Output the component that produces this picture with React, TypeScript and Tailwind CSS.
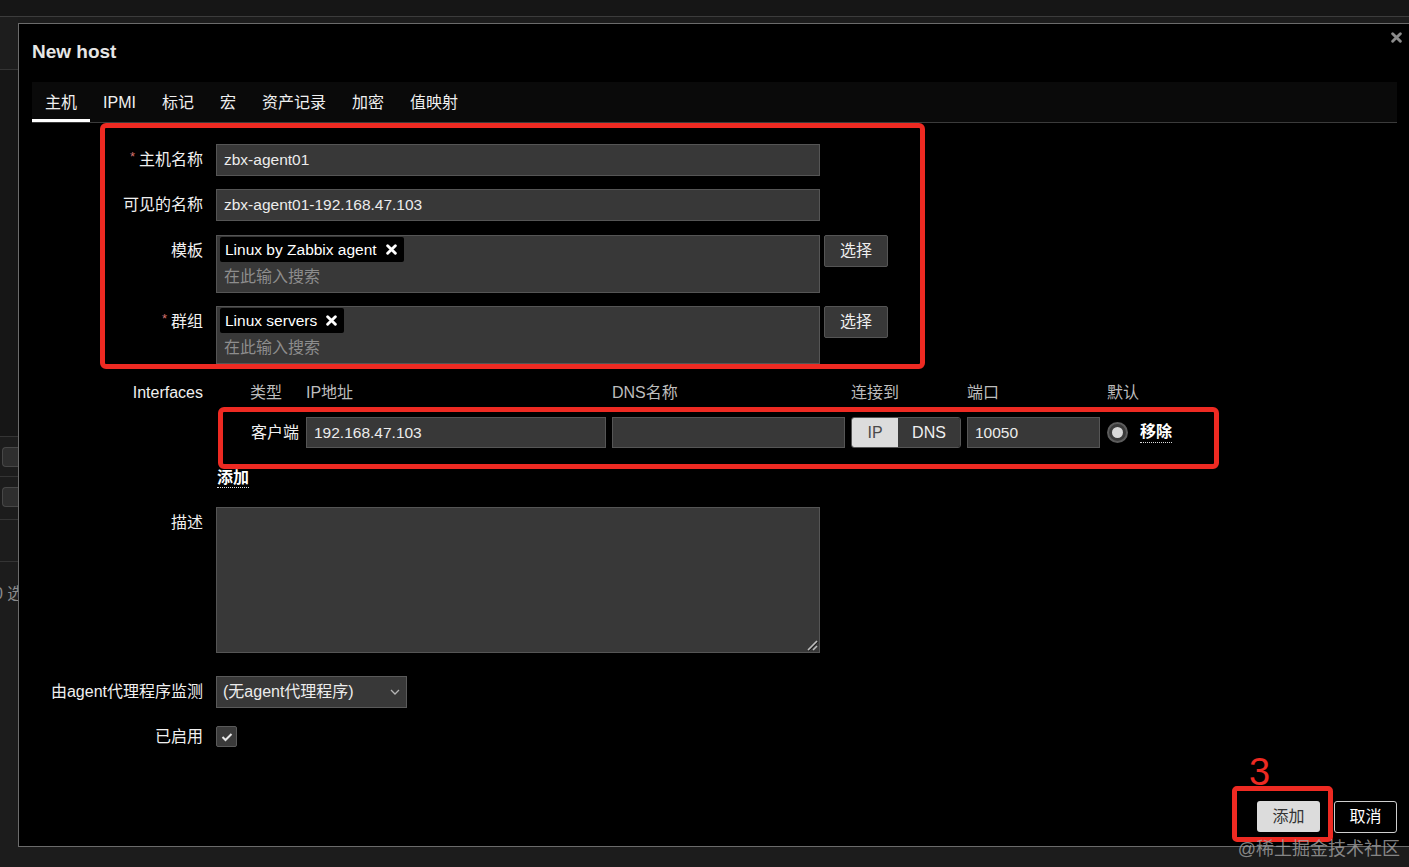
import React from 'react';

const font = "font-['Liberation_Sans','Noto_Sans_CJK_SC',sans-serif]";
const inputCls =
  'h-[32px] bg-[#383838] border border-[#555] px-[7px] text-[15.5px] text-[#ececec] outline-none';
const red = 'border-[#ee2a22]';

function Cross({ className = '' }: { className?: string }) {
  return (
    <svg viewBox="0 0 10 10" className={className}>
      <path d="M1.5 1.5 L8.5 8.5 M8.5 1.5 L1.5 8.5" stroke="currentColor" strokeWidth="2.6" strokeLinecap="round" />
    </svg>
  );
}

function Tag({ label }: { label: string }) {
  return (
    <span className="inline-flex items-center h-[25px] bg-black rounded-[2px] pl-[5px] pr-[7px] text-[15.5px] text-white">
      {label}
      <Cross className="w-[11px] h-[11px] ml-[9px] text-white" />
    </span>
  );
}

function MultiSelect({ tag }: { tag: string }) {
  return (
    <div className="w-[604px] h-[58px] bg-[#383838] border border-[#555] pl-[3px] pt-[1px]">
      <Tag label={tag} />
      <div className="pl-[4px] mt-[4px] leading-[22px] text-[16px] text-[#8d8d8d]">在此输入搜索</div>
    </div>
  );
}

function PickButton() {
  return (
    <button className="ml-[4px] w-[64px] h-[32px] bg-[#383838] border border-[#555] rounded-[2px] text-[16px] text-[#eee]">
      选择
    </button>
  );
}

function BoxLabel({ children, required }: { children: React.ReactNode; required?: boolean }) {
  return (
    <div className="w-[98px] mr-[13px] h-[32px] flex items-center justify-end text-[16px] text-[#f0f0f0] shrink-0">
      {required && <span className="text-[#d6716f] text-[13px] mr-[4px] relative -top-[3px]">*</span>}
      {children}
    </div>
  );
}

function Label({ children, h = 'h-[32px]' }: { children: React.ReactNode; h?: string }) {
  return (
    <div className={`w-[184px] mr-[13px] ${h} flex items-center justify-end text-[16px] text-[#f0f0f0] shrink-0`}>
      {children}
    </div>
  );
}

export default function App() {
  const tabs = ['主机', 'IPMI', '标记', '宏', '资产记录', '加密', '值映射'];
  return (
    <div className={`relative h-[867px] w-full overflow-hidden bg-[#1c1c1c] ${font}`}>
      <div className="h-[17px] bg-[#161616] border-b border-[#3c3c3c]" />
      <div className="flex">
        {/* page behind the dialog */}
        <div className="w-[18px] shrink-0 overflow-hidden">
          <div className="h-[53px] bg-[#1d1d1d] border-b border-[#343434]" />
          <div className="h-[367px] bg-[#161616] border-b border-[#343434]" />
          <div className="h-[10px]" />
          <div className="ml-[2px] h-[20px] rounded-l-[4px] bg-[#2e2e2e] border border-r-0 border-[#474747]" />
          <div className="h-[10px] border-b border-[#343434]" />
          <div className="h-[10px]" />
          <div className="ml-[2px] h-[20px] rounded-l-[4px] bg-[#2e2e2e] border border-r-0 border-[#474747]" />
          <div className="h-[13px] border-b border-[#343434]" />
          <div className="h-[42px] border-b border-[#343434]" />
          <div className="mt-[20px] -ml-[6px] whitespace-nowrap text-[16px] text-[#8a8a8a]">0 选</div>
        </div>

        {/* dialog */}
        <div className="mt-[6px] flex-1 h-[824px] bg-black border-t border-l border-b border-[#6b6b6b] flex flex-col">
          <div className="flex justify-between">
            <div className="h-[56px] pl-[13px] flex items-center text-[19px] font-bold text-[#e6e6e6]">New host</div>
            <Cross className="mt-[8px] mr-[7px] w-[11px] h-[11px] text-[#8b8b8b]" />
          </div>

          <div className="mt-[2px] ml-[13px] mr-[12px] h-[41px] bg-[#0a0a0a] border-b border-[#3b3b3b] flex">
            {tabs.map((t, i) => (
              <div
                key={t}
                className={`h-[40px] px-[13px] pt-[4px] flex items-center text-[16px] text-[#f0f0f0] border-b-[3px] ${
                  i === 0 ? 'border-white' : 'border-transparent'
                }`}
              >
                {t}
              </div>
            ))}
          </div>

          {/* annotated block 1 */}
          <div className={`ml-[81px] w-[825px] h-[246px] border-[5px] ${red} rounded-[6px] pt-[16px]`}>
            <div className="flex">
              <BoxLabel required>主机名称</BoxLabel>
              <input readOnly value="zbx-agent01" className={`${inputCls} w-[604px]`} />
            </div>
            <div className="flex mt-[13px]">
              <BoxLabel>可见的名称</BoxLabel>
              <input readOnly value="zbx-agent01-192.168.47.103" className={`${inputCls} w-[604px]`} />
            </div>
            <div className="flex mt-[14px] items-start">
              <BoxLabel>模板</BoxLabel>
              <MultiSelect tag="Linux by Zabbix agent" />
              <PickButton />
            </div>
            <div className="flex mt-[13px] items-start">
              <BoxLabel required>群组</BoxLabel>
              <MultiSelect tag="Linux servers" />
              <PickButton />
            </div>
          </div>

          {/* interfaces */}
          <div className="flex mt-[14px]">
            <Label h="h-[20px]">Interfaces</Label>
            <div className="flex flex-col">
              <div className="h-[20px] flex leading-[20px] text-[16px] text-[#bdbdbd]">
                <div className="w-[34px]" />
                <div className="w-[56px]">类型</div>
                <div className="w-[306px]">IP地址</div>
                <div className="w-[239px]">DNS名称</div>
                <div className="w-[116px]">连接到</div>
                <div className="w-[140px]">端口</div>
                <div>默认</div>
              </div>
              <div className={`mt-[4px] ml-[2px] w-[1001px] h-[62px] border-[5px] ${red} rounded-[6px] pt-[5px]`}>
                <div className="flex items-center h-[31px]">
                  <div className="w-[76px] text-right text-[16px] text-[#f0f0f0]">客户端</div>
                  <input readOnly value="192.168.47.103" className={`${inputCls} !h-[31px] ml-[7px] w-[300px]`} />
                  <input readOnly value="" className={`${inputCls} !h-[31px] ml-[6px] w-[233px]`} />
                  <div className="ml-[6px] w-[110px] h-[31px] flex rounded-[3px] overflow-hidden border border-[#555] text-[16px]">
                    <div className="w-[46px] bg-[#dcdcdc] text-[#4a4a4a] flex items-center justify-center">IP</div>
                    <div className="flex-1 bg-[#383838] text-[#f0f0f0] flex items-center justify-center">DNS</div>
                  </div>
                  <input readOnly value="10050" className={`${inputCls} !h-[31px] ml-[6px] w-[133px]`} />
                  <div className="ml-[7px] w-[21px] h-[21px] rounded-full bg-[#3a3a3a] border-[2px] border-[#5c5c5c] flex items-center justify-center">
                    <div className="w-[11px] h-[11px] rounded-full bg-[#d9d9d9]" />
                  </div>
                  <span className="ml-[12px] text-[16px] font-bold text-white leading-[20px] border-b border-dotted border-[#ddd]">
                    移除
                  </span>
                </div>
              </div>
              <span className="ml-[1px] w-fit text-[16px] font-bold text-white leading-[18px] border-b border-dotted border-[#ddd]">
                添加
              </span>
            </div>
          </div>

          {/* description */}
          <div className="flex mt-[19px] items-start">
            <Label>描述</Label>
            <div className="relative w-[604px] h-[146px] bg-[#383838] border border-[#555]">
              <svg viewBox="0 0 12 12" className="absolute right-[1px] bottom-[1px] w-[12px] h-[12px]">
                <path d="M2 11 L11 2 M7 11 L11 7" stroke="#bdbdbd" strokeWidth="1.6" />
                <path d="M3 12 L12 3" stroke="#1e1e1e" strokeWidth="1" />
              </svg>
            </div>
          </div>

          {/* proxy */}
          <div className="flex mt-[23px]">
            <Label>由agent代理程序监测</Label>
            <div className="w-[191px] h-[32px] bg-[#383838] border border-[#5a5a5a] pl-[6px] pr-[6px] flex items-center justify-between text-[16px] text-[#ececec]">
              <span>(无agent代理程序)</span>
              <svg viewBox="0 0 10 6" className="w-[10px] h-[6px]">
                <path d="M1 1 L5 5 L9 1" stroke="#b5b5b5" strokeWidth="1.3" fill="none" />
              </svg>
            </div>
          </div>

          {/* enabled */}
          <div className="flex mt-[18px] items-center">
            <Label h="h-[21px]">已启用</Label>
            <div className="w-[21px] h-[21px] bg-[#3a3a3a] border border-[#5a5a5a] rounded-[2px] flex items-center justify-center">
              <svg viewBox="0 0 12 10" className="w-[12px] h-[10px]">
                <path d="M1.5 5 L4.5 8 L10.5 2" stroke="#e6e6e6" strokeWidth="2" fill="none" />
              </svg>
            </div>
          </div>

          {/* footer */}
          <div className="mt-auto pb-[4px] pr-[12px] flex justify-end items-end">
            <div className={`relative w-[101px] h-[56px] border-[5px] ${red} rounded-[5px] pl-[20px] pt-[10px]`}>
              <span className="absolute left-[12px] -top-[38px] text-[38px] leading-none text-[#ee2a22]">3</span>
              <button className="w-[63px] h-[31px] bg-[#dcdcdc] rounded-[3px] text-[16px] text-[#333]">添加</button>
            </div>
            <button className="ml-[1px] mb-[9px] w-[63px] h-[32px] border border-[#cfcfcf] rounded-[3px] bg-black text-[16px] text-white">
              取消
            </button>
          </div>
        </div>
      </div>

      <div className="absolute right-[9px] bottom-[8px] leading-[20px] text-[18px] text-[#a3a3a3]/80">@稀土掘金技术社区</div>
    </div>
  );
}
